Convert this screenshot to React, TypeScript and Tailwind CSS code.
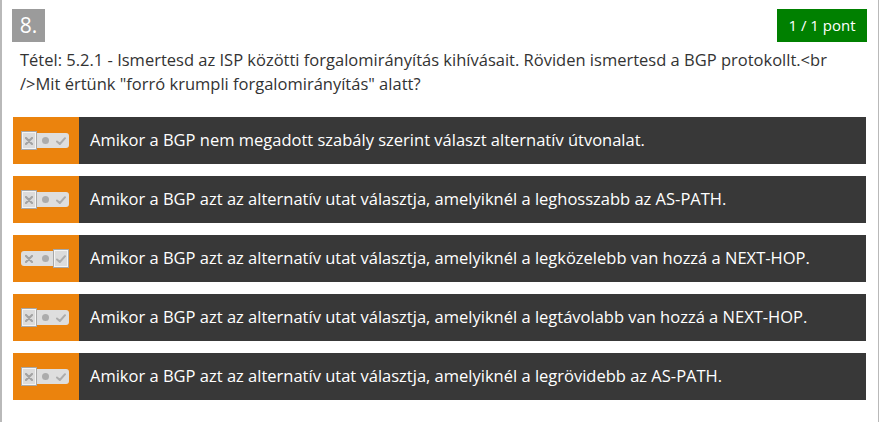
import React from "react"

interface AnswerProps {
  text: string,
  selected: number
}

const XIcon = () => (
  <svg width="8" height="8" viewBox="0 0 8 8">
    <path d="M1 1 L7 7 M7 1 L1 7" stroke="#a3a3a3" strokeWidth="2.2" strokeLinecap="round" />
  </svg>
)

const DotIcon = () => <div className="h-[7px] w-[7px] rounded-full bg-[#acacac]"></div>

const CheckIcon = () => (
  <svg width="10" height="8" viewBox="0 0 10 8">
    <path d="M1 4.5 L3.8 7 L9 1.2" stroke="#acacac" strokeWidth="2" fill="none" strokeLinecap="round" strokeLinejoin="round" />
  </svg>
)

const Toggle: React.FC<{selected: number}> = ({selected}) => {
  const icons = [<XIcon key="x" />, <DotIcon key="d" />, <CheckIcon key="c" />]
  return (
    <div className="flex h-[15px] w-[48px] items-center rounded-[3px] bg-[#dedede]">
      {icons.map((icon, i) => (
        <div
          key={i}
          className={
            i === selected
              ? "flex h-[19px] w-[16px] items-center justify-center border border-[#a8a8a8] bg-[#dcdcdc] shadow-[inset_0_0_0_1px_#f4f4f4]"
              : "flex h-[15px] w-[16px] items-center justify-center"
          }
        >
          {icon}
        </div>
      ))}
    </div>
  )
}

const Answer: React.FC<AnswerProps> = ({text, selected}) => {
  return (
    <div className="flex h-[47px]">
      <div className="flex w-[66px] items-center bg-[#eb830d] pl-[8px]">
        <Toggle selected={selected} />
      </div>
      <div className="flex flex-1 items-center bg-[#383838] pl-[11px] text-[16.5px] text-white">
        {text}
      </div>
    </div>
  )
}

const answers = [
  { text: "Amikor a BGP nem megadott szabály szerint választ alternatív útvonalat.", selected: 0 },
  { text: "Amikor a BGP azt az alternatív utat választja, amelyiknél a leghosszabb az AS-PATH.", selected: 0 },
  { text: "Amikor a BGP azt az alternatív utat választja, amelyiknél a legközelebb van hozzá a NEXT-HOP.", selected: 2 },
  { text: "Amikor a BGP azt az alternatív utat választja, amelyiknél a legtávolabb van hozzá a NEXT-HOP.", selected: 0 },
  { text: "Amikor a BGP azt az alternatív utat választja, amelyiknél a legrövidebb az AS-PATH.", selected: 0 },
]

export default function App() {
  return (
    <div className="h-[422px] w-[884px] overflow-hidden bg-white font-['Open_Sans',sans-serif]">
      <div className="h-[422px] w-[879px] border-l-2 border-r border-[#b9b9b9]">
        <div className="flex items-start justify-between pl-[10px] pr-[11px] pt-[9px]">
          <div className="flex h-[33px] w-[33px] items-center justify-center bg-[#9b9b9b] text-[21px] text-white">
            8.
          </div>
          <div className="flex h-[33px] w-[90px] items-center justify-center bg-[#008000] text-[15px] text-white">
            1 / 1 pont
          </div>
        </div>
        <p className="mt-[6px] px-[18px] text-[16.5px] leading-[24px] text-[#333333]">
          Tétel: 5.2.1 - Ismertesd az ISP közötti forgalomirányítás kihívásait. Röviden ismertesd a BGP protokollt.&lt;br
          <br />
          /&gt;Mit értünk "forró krumpli forgalomirányítás" alatt?
        </p>
        <div className="mt-[21px] flex flex-col gap-[12px] pl-[11px] pr-[12px]">
          {answers.map((a, i) => (
            <Answer key={i} text={a.text} selected={a.selected} />
          ))}
        </div>
      </div>
    </div>
  )
}
